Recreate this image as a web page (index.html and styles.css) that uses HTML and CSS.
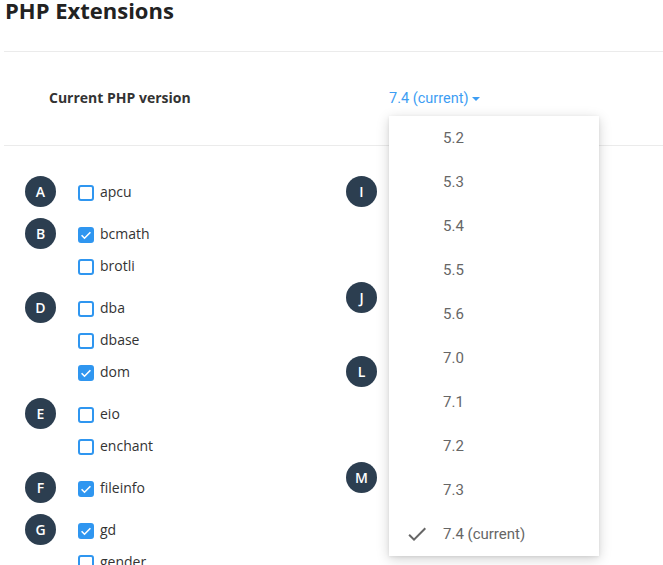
FILE: index.html
```html
<!DOCTYPE html>
<html lang="en">

<head>
    <meta charset="UTF-8">
    <meta name="viewport" content="width=device-width, initial-scale=1.0">
    <title>PHP Extensions</title>
    <link rel="stylesheet" href="styles.css">
</head>

<body>

    <div class="page">
        <h1 class="page-title">PHP Extensions</h1>

        <div class="version-row">
            <span class="version-label">Current PHP version</span>
            <div class="version-select">
                <button class="select-trigger" type="button">7.4 (current)<span class="caret"></span></button>
                <ul class="select-menu">
                    <li>5.2</li>
                    <li>5.3</li>
                    <li>5.4</li>
                    <li>5.5</li>
                    <li>5.6</li>
                    <li>7.0</li>
                    <li>7.1</li>
                    <li>7.2</li>
                    <li>7.3</li>
                    <li class="selected">
                        <svg class="menu-check" viewBox="0 0 24 24" width="24" height="24"><path d="M9 16.17L4.83 12l-1.42 1.41L9 19 21 7l-1.41-1.41z"/></svg>
                        7.4 (current)
                    </li>
                </ul>
            </div>
        </div>

        <div class="ext-grid">
            <!-- Left column -->
            <div class="ext-col">
                <div class="ext-group">
                    <span class="letter">A</span>
                    <ul class="ext-list">
                        <li><span class="checkbox"></span><span class="ext-name">apcu</span></li>
                    </ul>
                </div>
                <div class="ext-group">
                    <span class="letter">B</span>
                    <ul class="ext-list">
                        <li><span class="checkbox checked"><svg viewBox="0 0 16 16"><path d="M3.6 8.3l2.9 2.9 5.9-6"/></svg></span><span class="ext-name">bcmath</span></li>
                        <li><span class="checkbox"></span><span class="ext-name">brotli</span></li>
                    </ul>
                </div>
                <div class="ext-group">
                    <span class="letter">D</span>
                    <ul class="ext-list">
                        <li><span class="checkbox"></span><span class="ext-name">dba</span></li>
                        <li><span class="checkbox"></span><span class="ext-name">dbase</span></li>
                        <li><span class="checkbox checked"><svg viewBox="0 0 16 16"><path d="M3.6 8.3l2.9 2.9 5.9-6"/></svg></span><span class="ext-name">dom</span></li>
                    </ul>
                </div>
                <div class="ext-group">
                    <span class="letter">E</span>
                    <ul class="ext-list">
                        <li><span class="checkbox"></span><span class="ext-name">eio</span></li>
                        <li><span class="checkbox"></span><span class="ext-name">enchant</span></li>
                    </ul>
                </div>
                <div class="ext-group">
                    <span class="letter">F</span>
                    <ul class="ext-list">
                        <li><span class="checkbox checked"><svg viewBox="0 0 16 16"><path d="M3.6 8.3l2.9 2.9 5.9-6"/></svg></span><span class="ext-name">fileinfo</span></li>
                    </ul>
                </div>
                <div class="ext-group">
                    <span class="letter">G</span>
                    <ul class="ext-list">
                        <li><span class="checkbox checked"><svg viewBox="0 0 16 16"><path d="M3.6 8.3l2.9 2.9 5.9-6"/></svg></span><span class="ext-name">gd</span></li>
                        <li><span class="checkbox"></span><span class="ext-name">gender</span></li>
                        <li><span class="checkbox"></span><span class="ext-name">geoip</span></li>
                        <li><span class="checkbox"></span><span class="ext-name">gmagick</span></li>
                    </ul>
                </div>
            </div>

            <!-- Right column -->
            <div class="ext-col">
                <div class="ext-group">
                    <span class="letter">I</span>
                    <ul class="ext-list">
                        <li><span class="checkbox"></span><span class="ext-name">imagick</span></li>
                        <li><span class="checkbox"></span><span class="ext-name">imap</span></li>
                        <li><span class="checkbox"></span><span class="ext-name">intl</span></li>
                    </ul>
                </div>
                <div class="ext-group">
                    <span class="letter">J</span>
                    <ul class="ext-list">
                        <li><span class="checkbox"></span><span class="ext-name">json</span></li>
                        <li><span class="checkbox"></span><span class="ext-name">jsmin</span></li>
                    </ul>
                </div>
                <div class="ext-group">
                    <span class="letter">L</span>
                    <ul class="ext-list">
                        <li><span class="checkbox"></span><span class="ext-name">ldap</span></li>
                        <li><span class="checkbox"></span><span class="ext-name">libsodium</span></li>
                        <li><span class="checkbox"></span><span class="ext-name">lzf</span></li>
                    </ul>
                </div>
                <div class="ext-group">
                    <span class="letter">M</span>
                    <ul class="ext-list">
                        <li><span class="checkbox"></span><span class="ext-name">mailparse</span></li>
                        <li><span class="checkbox"></span><span class="ext-name">mbstring</span></li>
                    </ul>
                </div>
            </div>
        </div>
    </div>

</body>

</html>
```

FILE: styles.css
```css
/* Page */
html,
body {
    margin: 0;
    overflow: hidden;
    background: #ffffff;
}

body {
    font-family: 'Open Sans', 'Liberation Sans', sans-serif;
    color: #333;
}

.page {
    padding-left: 4px;
}

.page-title {
    margin: 0 0 31px;
    padding-left: 1px;
    font-size: 22px;
    line-height: 20px;
    font-weight: 700;
    color: #222;
}

/* Current version row */
.version-row {
    display: grid;
    grid-template-columns: 340px auto;
    align-items: center;
    height: 93px;
    padding-left: 45px;
    border-top: 1px solid #ebebeb;
    border-bottom: 1px solid #ebebeb;
}

.version-label {
    padding-bottom: 2px;
    font-size: 14px;
    font-weight: 700;
    color: #333;
}

.version-select {
    position: relative;
    justify-self: start;
}

.select-trigger {
    display: flex;
    align-items: center;
    padding: 0;
    border: none;
    background: none;
    font-family: Roboto, 'Liberation Sans', sans-serif;
    font-size: 14.5px;
    line-height: 20px;
    color: #3d9df3;
    cursor: pointer;
}

.caret {
    width: 0;
    height: 0;
    margin-left: 4px;
    border-left: 4px solid transparent;
    border-right: 4px solid transparent;
    border-top: 4px solid #3d9df3;
}

.select-menu {
    position: absolute;
    top: calc(100% + 7px);
    left: 0;
    z-index: 10;
    width: 210px;
    margin: 0;
    padding: 0;
    list-style: none;
    background: #fff;
    box-shadow: 0 3px 12px rgba(0, 0, 0, 0.18), 0 1px 3px rgba(0, 0, 0, 0.08);
}

.select-menu li {
    position: relative;
    height: 44px;
    line-height: 44px;
    padding-left: 54px;
    font-family: Roboto, 'Liberation Sans', sans-serif;
    font-size: 15px;
    color: #666;
}

.menu-check {
    position: absolute;
    left: 16px;
    top: 10px;
    fill: #666;
}

/* Extension list */
.ext-grid {
    display: grid;
    grid-template-columns: 321px 1fr;
    padding-top: 30px;
}

.ext-col {
    padding-left: 21px;
}

.ext-group {
    display: flex;
    align-items: flex-start;
    margin-bottom: 9px;
}

.letter {
    flex: none;
    display: flex;
    align-items: center;
    justify-content: center;
    width: 31px;
    height: 31px;
    margin-right: 22px;
    border-radius: 50%;
    background: #2c3e50;
    color: #fff;
    font-size: 14px;
    font-weight: 600;
}

.ext-list {
    margin: 0;
    padding: 1px 0 0;
    list-style: none;
}

.ext-list li {
    display: flex;
    align-items: center;
    height: 32px;
    font-size: 14px;
    color: #333;
}

.ext-name {
    line-height: 20px;
    padding-bottom: 3px;
}

.checkbox {
    flex: none;
    display: flex;
    align-items: center;
    justify-content: center;
    width: 16px;
    height: 16px;
    margin-right: 6px;
    border: 2px solid #2f96f0;
    border-radius: 3px;
    box-sizing: border-box;
}

.checkbox.checked {
    background: #2f96f0;
}

.checkbox svg {
    width: 16px;
    height: 16px;
    flex: none;
    fill: none;
    stroke: #fff;
    stroke-width: 1.6;
}
```
